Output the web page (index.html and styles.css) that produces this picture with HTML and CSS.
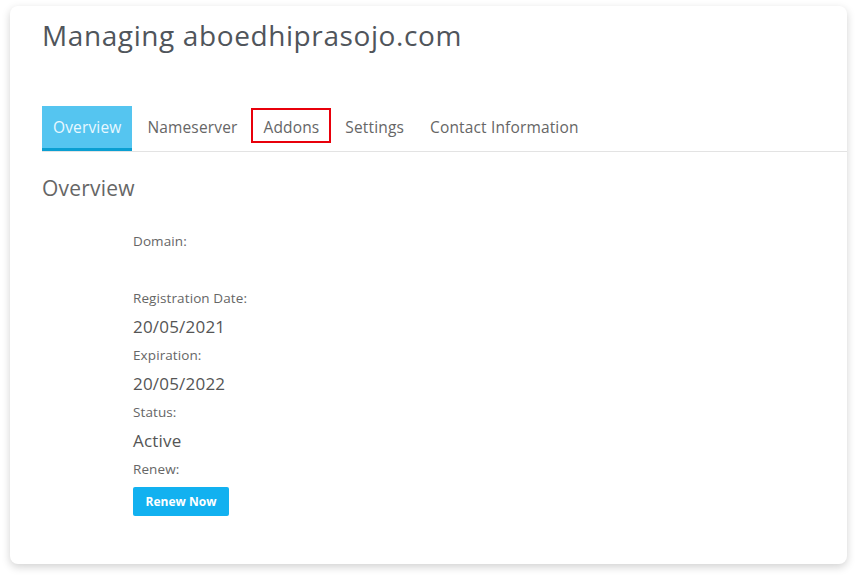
FILE: index.html
```html
<!DOCTYPE html>
<html>
<head>
<meta charset="utf-8">
<link rel="stylesheet" href="styles.css">
</head>
<body>
<div class="card">
  <h1 class="title">Managing aboedhiprasojo.com</h1>
  <nav class="tabs">
    <span class="tab active">Overview</span>
    <span class="tab">Nameserver</span>
    <span class="tab marked">Addons</span>
    <span class="tab">Settings</span>
    <span class="tab">Contact Information</span>
  </nav>
  <h2 class="section">Overview</h2>
  <div class="details">
    <div class="label">Domain:</div>
    <div class="value empty"></div>
    <div class="label">Registration Date:</div>
    <div class="value">20/05/2021</div>
    <div class="label">Expiration:</div>
    <div class="value">20/05/2022</div>
    <div class="label">Status:</div>
    <div class="value">Active</div>
    <div class="label">Renew:</div>
    <button class="btn">Renew Now</button>
  </div>
</div>
</body>
</html>
```
FILE: styles.css
```css
html, body { margin: 0; padding: 0; background: #fff; }
body {
  font-family: "Open Sans", "Liberation Sans", sans-serif;
  color: #555;
  padding: 6px 10px 14px 10px;
}
.card {
  background: #fff;
  border-radius: 8px;
  box-shadow: 0 3px 8px rgba(0,0,0,0.18);
  height: 558px;
  box-sizing: border-box;
  padding: 10px 0 0 32px;
}
.title {
  margin: 0;
  font-weight: 400;
  font-size: 28px;
  letter-spacing: 0.6px;
  line-height: 38px;
  color: #50555b;
}
.tabs {
  margin-top: 52px;
  display: flex;
  border-bottom: 1px solid #e3e3e3;
  height: 45px;
}
.tab {
  position: relative;
  padding: 0 11px;
  display: flex;
  align-items: center;
  font-size: 15.5px;
  letter-spacing: 0.15px;
  color: #666;
  height: 42px;
  margin-right: 4px;
}
.tab.active {
  background: #55c5f0;
  color: #e8f8ff;
  border-bottom: 3px solid #0a9fd2;
}
.tab.marked::after {
  content: "";
  position: absolute;
  left: -1px;
  right: -1px;
  top: 2px;
  bottom: 5px;
  border: 2px solid #e8000b;
}
.section {
  margin: 22px 0 0 0;
  font-weight: 400;
  font-size: 21px;
  letter-spacing: 0.2px;
  color: #666;
}
.details {
  padding-left: 91px;
  margin-top: 30px;
  display: flex;
  flex-direction: column;
  align-items: flex-start;
}
.label {
  font-size: 13.5px;
  letter-spacing: 0.1px;
  color: #666;
  line-height: 18px;
  margin-bottom: 7px;
}
.value {
  font-size: 17px;
  letter-spacing: 0.2px;
  color: #555;
  line-height: 25px;
  margin-bottom: 7px;
}
.value.empty { height: 25px; }
.btn {
  margin-top: 2px;
  border: none;
  background: #12b1f0;
  color: #fff;
  font-family: inherit;
  font-weight: 700;
  font-size: 12px;
  width: 96px;
  height: 29px;
  border-radius: 2px;
}
```
